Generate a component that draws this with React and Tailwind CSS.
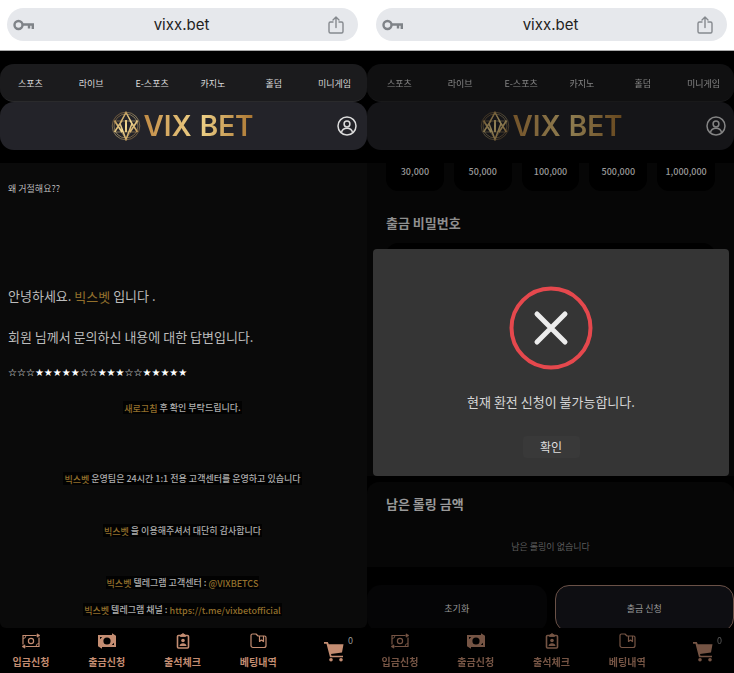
import { clsx } from 'clsx';

const NAV = ['스포츠', '라이브', 'E-스포츠', '카지노', '홀덤', '미니게임'];
const AMOUNTS = ['30,000', '50,000', '100,000', '500,000', '1,000,000'];

function KeyIcon() {
  return (
    <svg width="22" height="14" viewBox="0 0 22 14" fill="none" stroke="#7f8388" strokeWidth="2.4">
      <circle cx="5.5" cy="7" r="4" />
      <path d="M9.5 6.5H21M16 6.5v4M19.8 6.5v4.5" />
    </svg>
  );
}

function ShareIcon() {
  return (
    <svg width="16" height="18" viewBox="0 0 16 18" fill="none" stroke="#85898e" strokeWidth="1.4" strokeLinecap="round" strokeLinejoin="round">
      <path d="M5 6H2.5A1.5 1.5 0 0 0 1 7.5V15.5A1.5 1.5 0 0 0 2.5 17h11a1.5 1.5 0 0 0 1.5-1.5V7.5A1.5 1.5 0 0 0 13.5 6H11M8 11.5V1M5 4l3-3 3 3" />
    </svg>
  );
}

function Emblem() {
  return (
    <svg width="30" height="30" viewBox="0 0 30 30" fill="none" stroke="url(#gold)">
      <defs>
        <linearGradient id="gold" gradientUnits="userSpaceOnUse" x1="0" y1="0" x2="30" y2="30">
          <stop offset="0" stopColor="#8a5a24" />
          <stop offset=".5" stopColor="#f5dc96" />
          <stop offset="1" stopColor="#9a672c" />
        </linearGradient>
      </defs>
      <circle cx="15" cy="15" r="13.8" strokeWidth="1" opacity=".5" />
      <circle cx="15" cy="15" r="12" strokeWidth="1" opacity=".5" />
      <path d="M15 1.5l6 11-6 16L9 12.5zM3.5 9.5L11 21M11 9.5L3.5 21M19 9.5L26.5 21M26.5 9.5L19 21" strokeWidth="1.5" />
      <path d="M3 10h24M4 21h22M15 2L4 21M15 2l11 19M15 28L3 10M15 28l12-18" strokeWidth=".7" opacity=".7" />
      <path d="M15 9v12" strokeWidth="2" />
    </svg>
  );
}

function UserIcon() {
  return (
    <svg width="20" height="20" viewBox="0 0 20 20" fill="none" stroke="#dcdcdc" strokeWidth="1.5">
      <circle cx="10" cy="10" r="9" />
      <circle cx="10" cy="8" r="2.9" />
      <path d="M4.5 16.5c.5-3 2.5-4.3 5.5-4.3s5 1.3 5.5 4.3" />
    </svg>
  );
}

function DepositIcon() {
  return (
    <svg width="20" height="16" viewBox="0 0 20 16" fill="none" stroke="currentColor" strokeWidth="1.2">
      <path d="M15.5 2.5H2v9M4.5 13.5H18v-9" />
      <path d="M2 5.500q3 0 3-3M18 10.500q-3 0-3 3" strokeWidth=".9" />
      <circle cx="10" cy="8" r="2.6" />
      <path d="M16 .8l3 1.7-3 1.700zM4 11.800l-3 1.700 3 1.700z" fill="currentColor" strokeWidth=".6" />
    </svg>
  );
}

function WithdrawIcon() {
  return (
    <svg width="20" height="16" viewBox="0 0 20 16" fill="currentColor">
      <path fillRule="evenodd" d="M1 2h14V.3l4 2.500V14H5v1.700L1 13.200zM10 4.400a3.600 3.600 0 1 0 0 7.200 3.600 3.600 0 0 0 0-7.200zM3 4v2.200L5.200 4zM17 12V9.800L14.800 12z" />
    </svg>
  );
}

function CheckIcon() {
  return (
    <svg width="14" height="16" viewBox="0 0 14 16" fill="none" stroke="currentColor" strokeWidth="1.6">
      <rect x="1.5" y="2.5" width="11" height="12.5" rx="1" />
      <path d="M4.5 2.2L7 .5l2.500 1.700v1.300h-5z" fill="currentColor" strokeWidth=".8" />
      <circle cx="7" cy="7.5" r="1.8" fill="currentColor" stroke="none" />
      <path d="M3.5 13c.3-2 1.500-2.800 3.500-2.800s3.200.8 3.500 2.800z" fill="currentColor" stroke="none" />
    </svg>
  );
}

function BetsIcon() {
  return (
    <svg width="17" height="16" viewBox="0 0 17 16" fill="none" stroke="currentColor" strokeWidth="1.2" strokeLinejoin="round">
      <path d="M1 2.5A1.5 1.5 0 0 1 2.5 1H6l2 2h6.5A1.5 1.5 0 0 1 16 4.5v8a2 2 0 0 1-2 2H3a2 2 0 0 1-2-2zM9.5 3v5.500l2-1.500 2 1.500V3" />
    </svg>
  );
}

function CartIcon() {
  return (
    <svg width="21" height="21" viewBox="0 0 21 21" fill="currentColor">
      <path d="M0 1h3.800l1 2.200H19.500L18 11.500l-11 1.500.5 1.700h11.500v1.500H6L2.500 2.800H0z" />
      <circle cx="7" cy="18.8" r="1.8" />
      <circle cx="17" cy="18.8" r="1.8" />
    </svg>
  );
}

const TABS = [
  { label: '입금신청', Icon: DepositIcon },
  { label: '출금신청', Icon: WithdrawIcon },
  { label: '출석체크', Icon: CheckIcon },
  { label: '베팅내역', Icon: BetsIcon },
];

function AddressBar({ inset }) {
  return (
    <div className={clsx('h-[51px] border-b border-[#a9a9a9] bg-white pt-2', inset)}>
      <div className="mx-[7px] flex h-[33px] items-center justify-between rounded-full bg-[#e6e8ec] pr-3.5 pl-1.5">
        <KeyIcon />
        <input
          type="text"
          readOnly
          aria-label="주소"
          defaultValue="vixx.bet"
          className="w-0 flex-1 bg-transparent text-center font-['Inter',sans-serif] text-[15px] leading-5 text-[#222] outline-none"
        />
        <button aria-label="공유"><ShareIcon /></button>
      </div>
    </div>
  );
}

function SiteHeader({ inset, dimmed }) {
  return (
    <header className={clsx('bg-black pt-[13px] pb-[13px]', dimmed && 'opacity-60')}>
      <nav className={clsx('grid h-[38px] grid-cols-6 items-center rounded-[14px] border-b border-[#2a2a2c] bg-[#1b1b1d] pt-0.5', inset)}>
        {NAV.map((n) => (
          <a key={n} href="#" className="text-center text-[9px] leading-4 text-[#dadada]">{n}</a>
        ))}
      </nav>
      <div className={clsx('flex h-[48px] items-center rounded-[14px] bg-[#232329]', inset)}>
        <span className="w-9" />
        <a href="#" className="flex flex-1 items-center justify-center gap-0.5">
          <Emblem />
          <span className="flex gap-2 bg-linear-to-r from-[#c08a44] via-[#f0d48a] to-[#a9742f] bg-clip-text font-['Inter',sans-serif] text-[28px] leading-8 font-semibold text-transparent">
            <span>VIX</span>
            <span>BET</span>
          </span>
        </a>
        <button aria-label="내 정보" className="flex w-9 justify-center"><UserIcon /></button>
      </div>
    </header>
  );
}

function TabBar({ inset, dimmed }) {
  return (
    <footer className={clsx('bg-black', inset)}>
      <div className={clsx('flex h-[45px] justify-between px-3 pt-[5px] text-[#c48d72]', dimmed && 'opacity-60')}>
        {TABS.map(({ label, Icon }) => (
          <a key={label} href="#" className="flex w-[38px] flex-col items-center gap-[5px]">
            <Icon />
            <span className="text-[10px] leading-4 font-bold whitespace-nowrap">{label}</span>
          </a>
        ))}
        <button aria-label="장바구니" className="relative flex w-[38px] justify-center pt-2">
          <CartIcon />
          <span className="absolute top-0 right-0 text-[9px] leading-4 text-[#999]">0</span>
        </button>
      </div>
    </footer>
  );
}

function Gold({ href, children }) {
  const cls = 'align-[-1px] leading-none text-[#93702c]';
  return href ? <a href={href} className={cls}>{children}</a> : <span className={cls}>{children}</span>;
}

function Notice({ className, children }) {
  return (
    <p className={clsx('text-center text-[9px] leading-5 font-medium text-[#adadad]', className)}>
      <span className="bg-[#020202] px-px">{children}</span>
    </p>
  );
}

function Inquiry() {
  return (
    <main className="flex-1 rounded-b-md bg-[#0a0a0a] pt-4 pb-[5px] text-[#bcbcbc]">
      <div className="px-2">
        <p className="text-[9px] leading-5">왜 거절해요??</p>
        <p className="mt-[87px] text-[13px] leading-5">
          안녕하세요. <Gold>빅스벳</Gold> 입니다 .
        </p>
        <p className="mt-[21px] text-[13px] leading-5">회원 님께서 문의하신 내용에 대한 답변입니다.</p>
        <p className="mt-4 font-['DejaVu_Sans',sans-serif] text-[10px] leading-5 text-white">☆☆☆★★★★★☆☆★★★☆☆★★★★★</p>
      </div>
      <div className="pr-0.5">
        <Notice className="mt-[15px]"><Gold>새로고침</Gold> 후 확인 부탁드립니다.</Notice>
        <Notice className="mt-[51px]"><Gold>빅스벳</Gold> 운영팀은 24시간 1:1 전용 고객센터를 운영하고 있습니다</Notice>
        <Notice className="mt-8"><Gold>빅스벳</Gold> 을 이용해주셔서 대단히 감사합니다</Notice>
        <Notice className="mt-8"><Gold>빅스벳</Gold> 텔레그램 고객센터 : <Gold href="#">@VIXBETCS</Gold></Notice>
        <Notice className="mt-[7px]"><Gold>빅스벳</Gold> 텔레그램 채널 : <Gold href="#">https://t.me/vixbetofficial</Gold></Notice>
      </div>
    </main>
  );
}

function AlertDialog() {
  return (
    <div role="alertdialog" aria-labelledby="alert-msg" className="absolute top-[86px] right-[5px] left-1.5 flex flex-col items-center rounded bg-[#353535] pt-[37px] pb-[18px]">
      <svg width="84" height="84" viewBox="0 0 84 84" fill="none">
        <circle cx="42" cy="42" r="39.5" stroke="#e5484d" strokeWidth="4" />
        <path d="M28 28l28 28M56 28L28 56" stroke="#ececec" strokeWidth="5" strokeLinecap="round" />
      </svg>
      <p id="alert-msg" className="mt-[22px] text-[13px] leading-5 text-[#d6d6d6]">현재 환전 신청이 불가능합니다.</p>
      <button className="mt-6 h-[22px] w-[57px] rounded-sm bg-[#393939] text-[12px] leading-5 text-[#dedede]">확인</button>
    </div>
  );
}

function Withdraw() {
  return (
    <main className="relative flex flex-1 flex-col overflow-hidden bg-black">
      <section className="flex-1 bg-[#060606] px-[19px]">
        <div className="grid grid-cols-5 gap-2.5">
          {AMOUNTS.map((a) => (
            <button key={a} className="h-7 rounded-b-xl bg-black pb-2.5 text-[9px] leading-4 font-medium text-[#999]">{a}</button>
          ))}
        </div>
        <label htmlFor="pin" className="mt-[22px] block text-[13px] leading-5 font-bold text-[#8f8f8f]">출금 비밀번호</label>
        <input id="pin" type="password" className="mt-2.5 h-10 w-full rounded-xl bg-black" />
      </section>
      <section className="mt-1.5 h-[85px] rounded-t-xl bg-[#060606] px-[19px] pt-3">
        <h2 className="text-[13px] leading-5 font-bold text-[#999]">남은 롤링 금액</h2>
        <p className="mt-[23px] text-center text-[9px] leading-5 text-[#5c5c5c]">남은 롤링이 없습니다</p>
      </section>
      <div className="mt-[18px] -mb-1 grid grid-cols-2 gap-2 text-[9px] leading-4 text-[#999]">
        <button className="h-[47px] rounded-[14px] bg-[#050506]">초기화</button>
        <button className="h-[47px] rounded-[14px] border border-[#6a5147] bg-[#0e0e12]">출금 신청</button>
      </div>
      <AlertDialog />
    </main>
  );
}

export default function App() {
  return (
    <div className="grid min-h-screen grid-cols-2 bg-black font-['Noto_Sans_CJK_KR',sans-serif]">
      <div className="flex flex-col">
        <AddressBar inset="pr-0.5" />
        <SiteHeader inset="pr-0.5" />
        <Inquiry />
        <TabBar inset="pr-0.5" />
      </div>
      <div className="flex flex-col">
        <AddressBar inset="pl-0.5" />
        <SiteHeader inset="pl-0.5" dimmed />
        <Withdraw />
        <TabBar inset="pl-0.5" dimmed />
      </div>
    </div>
  );
}
